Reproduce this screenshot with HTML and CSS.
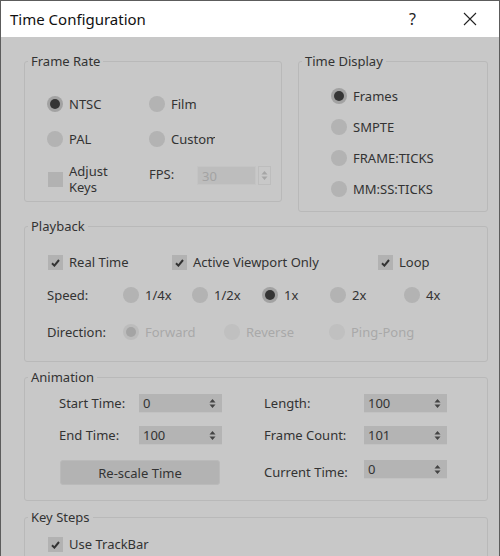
FILE: index.html
```html
<!DOCTYPE html>
<html>
<head>
    <title>Time Configuration</title>
    <link rel="stylesheet" href="styles.css">
</head>
<body>
    <div class="window">
        <div class="titlebar">
            <span class="title">Time Configuration</span>
            <span class="help">?</span>
            <span class="close">
                <svg width="14" height="14" viewBox="0 0 14 14"><path d="M1 1 L13 13 M13 1 L1 13" stroke="#222" stroke-width="1.1" fill="none"/></svg>
            </span>
        </div>

        <div class="content">
            <div class="top-row">
                <!-- Frame rate -->
                <fieldset class="group frame-rate">
                    <legend>Frame Rate</legend>
                    <div class="fr-grid">
                        <label class="opt"><span class="radio checked"></span>NTSC</label>
                        <label class="opt"><span class="radio"></span>Film</label>
                        <label class="opt"><span class="radio"></span>PAL</label>
                        <label class="opt"><span class="radio"></span><span class="clip">Custom</span></label>
                        <label class="opt adjust"><span class="check"></span><span class="two-line">Adjust<br>Keys</span></label>
                        <div class="fps">
                            <span class="fps-label">FPS:</span>
                            <span class="input disabled">30</span>
                            <span class="spin-box">
                                <svg width="7" height="11" viewBox="0 0 7 11"><path d="M0.5 4.5 L3.5 1 L6.5 4.5 Z M0.5 6.5 L3.5 10 L6.5 6.5 Z" fill="#a5a5a5"/></svg>
                            </span>
                        </div>
                    </div>
                </fieldset>

                <!-- Time display -->
                <fieldset class="group time-display">
                    <legend>Time Display</legend>
                    <div class="td-list">
                        <label class="opt"><span class="radio checked"></span>Frames</label>
                        <label class="opt"><span class="radio"></span>SMPTE</label>
                        <label class="opt"><span class="radio"></span>FRAME:TICKS</label>
                        <label class="opt"><span class="radio"></span>MM:SS:TICKS</label>
                    </div>
                </fieldset>
            </div>

            <!-- Playback -->
            <fieldset class="group playback">
                <legend>Playback</legend>
                <div class="pb-row checks">
                    <label class="opt w124"><span class="check on"></span>Real Time</label>
                    <label class="opt w206"><span class="check on"></span>Active Viewport Only</label>
                    <label class="opt"><span class="check on"></span>Loop</label>
                </div>
                <div class="pb-row speed">
                    <span class="row-label">Speed:</span>
                    <label class="opt w69"><span class="radio"></span>1/4x</label>
                    <label class="opt w70"><span class="radio"></span>1/2x</label>
                    <label class="opt w68"><span class="radio checked"></span>1x</label>
                    <label class="opt w74"><span class="radio"></span>2x</label>
                    <label class="opt"><span class="radio"></span>4x</label>
                </div>
                <div class="pb-row direction">
                    <span class="row-label">Direction:</span>
                    <label class="opt off w101"><span class="radio checked"></span>Forward</label>
                    <label class="opt off w105"><span class="radio"></span>Reverse</label>
                    <label class="opt off"><span class="radio"></span>Ping-Pong</label>
                </div>
            </fieldset>

            <!-- Animation -->
            <fieldset class="group animation">
                <legend>Animation</legend>
                <div class="anim-grid">
                    <span class="field-label">Start Time:</span>
                    <span class="input">0<i class="spin"></i></span>
                    <span class="field-label right">Length:</span>
                    <span class="input">100<i class="spin"></i></span>

                    <span class="field-label">End Time:</span>
                    <span class="input">100<i class="spin"></i></span>
                    <span class="field-label right">Frame Count:</span>
                    <span class="input">101<i class="spin"></i></span>

                    <button class="rescale">Re-scale Time</button>
                    <span class="field-label right low">Current Time:</span>
                    <span class="input low-input">0<i class="spin"></i></span>
                </div>
            </fieldset>

            <!-- Key steps -->
            <fieldset class="group key-steps">
                <legend>Key Steps</legend>
                <label class="opt"><span class="check on"></span>Use TrackBar</label>
            </fieldset>
        </div>
    </div>
</body>
</html>
```

FILE: styles.css
```css
/* Dialog look, greyed out */
body {
    margin: 0;
    font-family: "Noto Sans", "DejaVu Sans", sans-serif;
    font-size: 13px;
    color: #333;
    background-color: #c8c8c8;
}
.window {
    width: 500px;
    height: 556px;
    box-sizing: border-box;
    border: 1px solid #5c5c5c;
    border-bottom: none;
    overflow: hidden;
    background-color: #c8c8c8;
}
.titlebar {
    height: 36px;
    background-color: #fff;
    display: flex;
    align-items: center;
    padding-left: 9px;
}
.title {
    font-size: 15px;
    color: #111;
    flex: 1;
}
.help {
    font-size: 16px;
    color: #222;
    margin-right: 47px;
}
.close {
    display: flex;
    margin-right: 22px;
}
.content {
    padding: 15px 11px 0 23px;
}
.top-row {
    display: flex;
    align-items: flex-start;
    gap: 16px;
}

/* group boxes */
.group {
    margin: 0;
    border: 1px solid #b9b9b9;
    border-radius: 3px;
    min-width: 0;
    padding-left: 3px;
}
.group legend {
    padding: 0 3px;
    margin-left: 0;
    line-height: 18px;
    color: #333;
}
.frame-rate {
    width: 258px;
    box-sizing: border-box;
    padding-top: 24px;
    padding-bottom: 7px;
}
.frame-rate .fr-grid {
    margin-left: 19px;
}
.time-display {
    width: 190px;
    box-sizing: border-box;
    padding-top: 16px;
    padding-bottom: 12px;
}
.time-display .td-list {
    margin-left: 29px;
}
.playback {
    margin-top: 5px;
    padding-top: 17px;
    padding-bottom: 19px;
}
.playback .pb-row {
    margin-left: 19px;
}
.animation {
    margin-top: 6px;
    padding-top: 8px;
    padding-bottom: 15px;
}
.animation .anim-grid {
    margin-left: 31px;
}
.key-steps {
    margin-top: 7px;
    padding-top: 8px;
    padding-bottom: 20px;
}
.key-steps .opt {
    margin-left: 19px;
}

/* options */
.opt {
    display: flex;
    align-items: center;
    height: 20px;
    white-space: nowrap;
}
.opt.off {
    color: #a9a9a9;
}
.radio {
    width: 16px;
    height: 16px;
    border-radius: 50%;
    background-color: #b3b3b3;
    margin-right: 6px;
    box-sizing: border-box;
    position: relative;
    flex: none;
}
.radio.checked {
    background-color: #a2a2a2;
}
.radio.checked::after {
    content: "";
    position: absolute;
    left: 3px;
    top: 3px;
    width: 10px;
    height: 10px;
    border-radius: 50%;
    background-color: #353535;
}
.off .radio {
    background-color: #c0c0c0;
}
.off .radio.checked {
    background-color: #bcbcbc;
}
.off .radio.checked::after {
    background-color: #a4a4a4;
}
.check {
    width: 15px;
    height: 15px;
    background-color: #b2b2b2;
    margin: 0 6px 0 1px;
    flex: none;
    position: relative;
}
.check.on::after {
    content: "";
    position: absolute;
    left: 3px;
    top: 4px;
    width: 9px;
    height: 8px;
    background: url("data:image/svg+xml,%3Csvg xmlns='http://www.w3.org/2000/svg' width='9' height='8' viewBox='0 0 9 8'%3E%3Cpath d='M1 4.2 L3.4 6.6 L8 1' stroke='%23333' stroke-width='2' fill='none'/%3E%3C/svg%3E") no-repeat;
}

/* frame rate grid */
.fr-grid {
    display: grid;
    grid-template-columns: 102px 1fr;
    grid-template-rows: 20px 20px 30px;
    row-gap: 15px;
}
.clip {
    display: inline-block;
    width: 44px;
    overflow: hidden;
}
.adjust {
    height: 30px;
}
.two-line {
    line-height: 16px;
}
.fps {
    display: flex;
    align-items: flex-start;
    padding-top: 2px;
}
.fps-label {
    width: 48px;
    line-height: 17px;
}
.input {
    display: flex;
    align-items: center;
    justify-content: space-between;
    width: 83px;
    height: 19px;
    box-sizing: border-box;
    padding: 0 6px 0 4px;
    background-color: #b4b4b4;
    border-bottom: 1px solid #c2c2c2;
    color: #333;
}
.input.disabled {
    width: 59px;
    color: #a3a3a3;
    background-color: #bdbdbd;
    border: 1px solid #c4c4c4;
}
.spin-box {
    width: 13px;
    height: 19px;
    margin-left: 2px;
    box-sizing: border-box;
    border: 1px solid #bdbdbd;
    display: flex;
    align-items: center;
    justify-content: center;
}
.spin {
    width: 7px;
    height: 11px;
    background: url("data:image/svg+xml,%3Csvg xmlns='http://www.w3.org/2000/svg' width='7' height='11' viewBox='0 0 7 11'%3E%3Cpath d='M0.5 4.5 L3.5 1 L6.5 4.5 Z M0.5 6.5 L3.5 10 L6.5 6.5 Z' fill='%23444'/%3E%3C/svg%3E") no-repeat;
}

/* time display */
.td-list {
    display: flex;
    flex-direction: column;
    gap: 11px;
}

/* playback */
.pb-row {
    display: flex;
    align-items: center;
    height: 20px;
}
.pb-row.speed {
    margin-top: 13px;
}
.pb-row.direction {
    margin-top: 17px;
}
.row-label {
    width: 76px;
    flex: none;
}
.w124 { width: 124px; }
.w206 { width: 206px; }
.w69 { width: 69px; }
.w70 { width: 70px; }
.w68 { width: 68px; }
.w74 { width: 74px; }
.w101 { width: 101px; }
.w105 { width: 105px; }

/* animation */
.anim-grid {
    display: grid;
    grid-template-columns: 80px 83px 142px 83px;
    grid-template-rows: 19px 19px 27px;
    row-gap: 13px;
    align-items: start;
}
.field-label {
    line-height: 19px;
}
.field-label.right {
    margin-left: 42px;
}
.field-label.low {
    margin-top: 2px;
    line-height: 25px;
}
.low-input {
    margin-top: 2px;
}
.rescale {
    grid-column: 1 / 3;
    width: 160px;
    height: 25px;
    margin: 2px 0 0 1px;
    font-family: inherit;
    font-size: 13px;
    color: #333;
    background-color: #b3b3b3;
    border: 1px solid #bababa;
    border-radius: 3px;
    padding: 0;
}
```
